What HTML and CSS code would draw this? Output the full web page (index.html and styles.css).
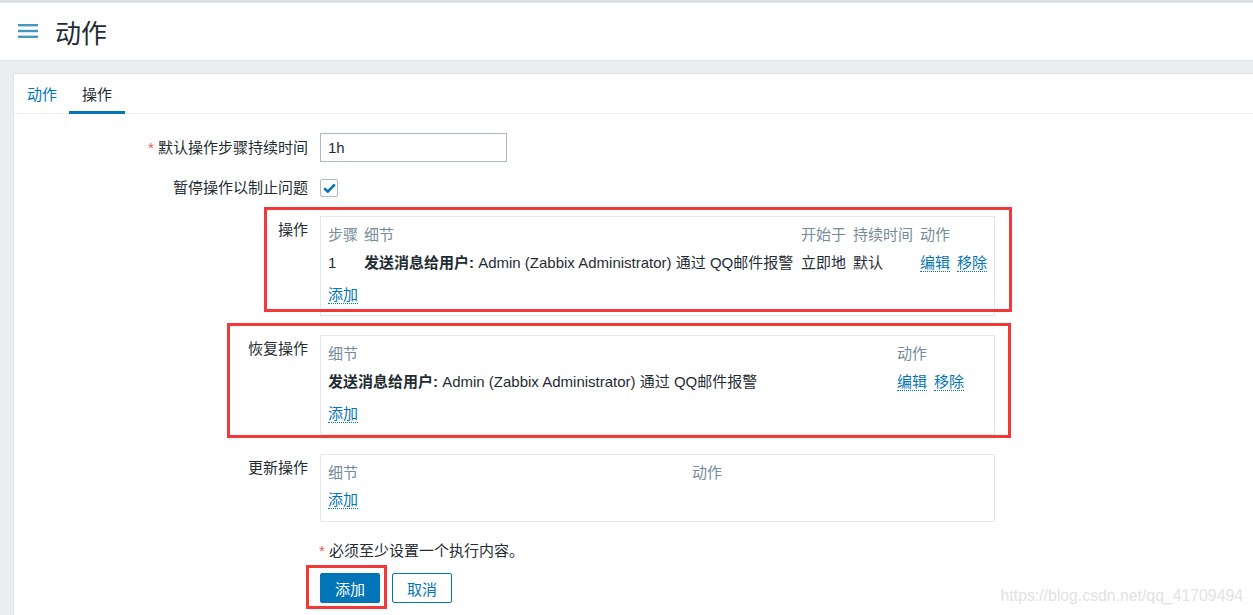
FILE: index.html
```html
<!DOCTYPE html>
<html lang="zh">
<head>
<meta charset="utf-8">
<title>动作</title>
<link rel="stylesheet" href="styles.css">
</head>
<body>
<div class="topline"></div>
<header class="header">
  <svg class="burger" width="20" height="14" viewBox="0 0 20 14"><rect x="0" y="0" width="20" height="2.4" fill="#4796c4"/><rect x="0" y="5.8" width="20" height="2.4" fill="#4796c4"/><rect x="0" y="11.6" width="20" height="2.4" fill="#4796c4"/></svg>
  <h1 class="title">动作</h1>
</header>
<main class="main">
  <section class="panel">
    <nav class="tabs">
      <span class="tab link-tab">动作</span>
      <span class="tab active">操作</span>
    </nav>
    <div class="form">
      <div class="row row-input">
        <label class="label"><span class="req">*</span> 默认操作步骤持续时间</label>
        <div class="field"><input class="text-input" type="text" value="1h"></div>
      </div>
      <div class="row row-check">
        <label class="label">暂停操作以制止问题</label>
        <div class="field"><span class="checkbox"><svg width="13" height="10" viewBox="0 0 13 10"><path d="M1.2 5.2 L4.8 8.6 L11.8 1.4" fill="none" stroke="#0275b8" stroke-width="2.6" stroke-linejoin="miter"/></svg></span></div>
      </div>
      <div class="row row-table">
        <label class="label label-top">操作</label>
        <div class="field">
          <div class="box grid-ops">
            <div class="th">步骤</div><div class="th">细节</div><div class="th">开始于</div><div class="th">持续时间</div><div class="th">动作</div>
            <div class="td tall">1</div><div class="td tall"><b>发送消息给用户:</b> Admin (Zabbix Administrator) 通过 QQ邮件报警</div><div class="td tall">立即地</div><div class="td tall">默认</div><div class="td tall"><a class="lnk">编辑</a><a class="lnk gap">移除</a></div>
            <div class="td full"><a class="lnk">添加</a></div>
          </div>
        </div>
      </div>
      <div class="row row-table">
        <label class="label label-top">恢复操作</label>
        <div class="field">
          <div class="box grid-rec">
            <div class="th">细节</div><div class="th">动作</div>
            <div class="td tall"><b>发送消息给用户:</b> Admin (Zabbix Administrator) 通过 QQ邮件报警</div><div class="td tall"><a class="lnk">编辑</a><a class="lnk gap">移除</a></div>
            <div class="td full"><a class="lnk">添加</a></div>
          </div>
        </div>
      </div>
      <div class="row row-table row-last">
        <label class="label label-top">更新操作</label>
        <div class="field">
          <div class="box grid-upd">
            <div class="th">细节</div><div class="th">动作</div>
            <div class="td full"><a class="lnk">添加</a></div>
          </div>
        </div>
      </div>
      <div class="row row-note">
        <div class="label"></div>
        <div class="field note"><span class="req">*</span> 必须至少设置一个执行内容。</div>
      </div>
      <div class="row row-buttons">
        <div class="label"></div>
        <div class="field buttons">
          <button class="btn btn-primary">添加</button>
          <button class="btn btn-alt">取消</button>
        </div>
      </div>
    </div>
  </section>
</main>
<div class="mark mark1"></div>
<div class="mark mark2"></div>
<div class="mark mark3"></div>
<div class="watermark">https://blog.csdn.net/qq_41709494</div>
</body>
</html>
```
FILE: styles.css
```css
* { box-sizing: border-box; }
html, body { margin: 0; padding: 0; }
body {
  background: #ebeef0;
  font-family: "Liberation Sans", "Noto Sans CJK SC", sans-serif;
  font-size: 15px;
  color: #1f2c33;
  height: 615px;
  overflow: hidden;
  position: relative;
}
.topline { height: 4px; background: #fff; border-top: 3px solid #dcdfe3; }
.header {
  background: #fff;
  height: 57px;
  border-bottom: 1px solid #dfe4e7;
  display: flex;
  align-items: center;
  padding-left: 18px;
}
.burger { display: block; margin-top: -2px; }
.title {
  margin: 3px 0 0 17px;
  font-weight: normal;
  font-size: 26px;
  line-height: 30px;
  color: #1f2c33;
}
.main { padding: 12px 0 0 13px; }
.panel {
  background: #fff;
  border-left: 1px solid #dfe4e7;
  border-top: 1px solid #dfe4e7;
  height: 560px;
}
.tabs {
  height: 40px;
  border-bottom: 1px solid #ebeef0;
  display: flex;
  padding-left: 0;
}
.tab {
  display: block;
  height: 40px;
  line-height: 41px;
  padding: 0 13px;
}
.link-tab { color: #0275b8; }
.active { border-bottom: 3px solid #0275b8; margin-left: -1px; }
.form { padding-top: 19px; }
.row { display: grid; grid-template-columns: 294px 1fr; column-gap: 12px; }
.label { text-align: right; line-height: 20px; white-space: nowrap; }
.label-top { padding-top: 4px; }
.req { color: #e45959; }
.row-input { align-items: center; margin-bottom: 15px; }
.row-check { align-items: center; height: 21px; margin-bottom: 18px; }
.row-table { align-items: start; margin-bottom: 19px; }
.row-table.row-last { margin-bottom: 19px; }
.row-note { margin-bottom: 12px; }
.text-input {
  width: 187px;
  height: 29px;
  border: 1px solid #acbbc2;
  font: inherit;
  color: #1f2c33;
  padding: 0 7px;
  display: block;
  outline: none;
}
.checkbox {
  display: flex;
  width: 18px;
  height: 18px;
  border: 1px solid #acbbc2;
  border-radius: 2px;
  align-items: center;
  justify-content: center;
}
.box {
  width: 675px;
  border: 1px solid #e3e7ea;
  padding: 7px 7px 11px 7px;
  display: grid;
  line-height: 20px;
}
.grid-ops { grid-template-columns: 36px 437px 52px 67px auto; height: 100px; }
.grid-rec { grid-template-columns: 569px auto; height: 100px; }
.grid-upd { grid-template-columns: 364px auto; height: 68px; }
.th { color: #768d99; height: 28px; padding-top: 1px; white-space: nowrap; }
.td { white-space: nowrap; height: 28px; }
.td.tall { height: 33px; padding-top: 1px; }
.full { grid-column: 1 / -1; }
.td b { font-weight: bold; }
.lnk {
  color: #0275b8;
  border-bottom: 1px dotted #0275b8;
  text-decoration: none;
  cursor: pointer;
}
.lnk.gap { margin-left: 7px; }
.note { line-height: 20px; margin-left: -1px; }
.buttons { display: flex; gap: 12px; }
.btn {
  font: inherit;
  width: 60px;
  height: 30px;
  border-radius: 2px;
  border: 1px solid #0275b8;
  padding: 0;
  cursor: pointer;
}
.btn-primary { background: #0275b8; color: #fff; }
.btn-alt { background: #fff; color: #0275b8; }
.mark {
  position: absolute;
  border: 3px solid #f23838;
  pointer-events: none;
}
.mark1 { left: 264px; top: 207px; width: 748px; height: 105px; }
.mark2 { left: 227px; top: 323px; width: 784px; height: 115px; }
.mark3 { left: 306px; top: 565px; width: 81px; height: 44px; }
.watermark {
  position: absolute;
  right: 10px;
  top: 587px;
  font-size: 15.8px;
  color: #e2e2e2;
  font-family: "Liberation Sans", sans-serif;
}
```
